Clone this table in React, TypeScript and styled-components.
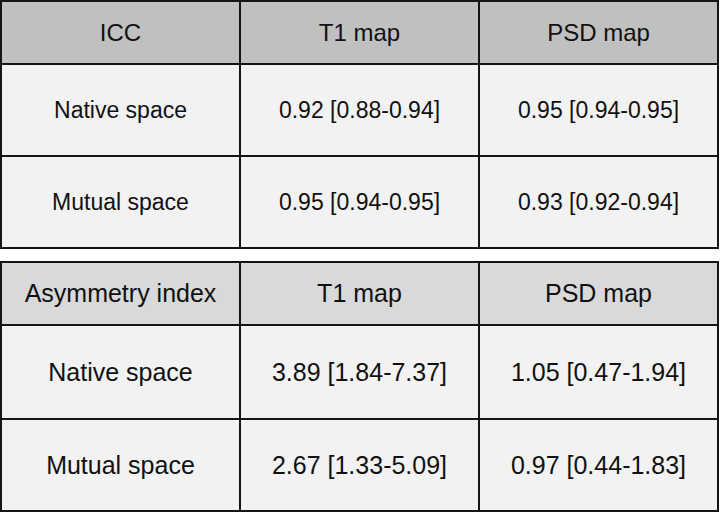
import { FC } from 'react';
import styled, { createGlobalStyle } from 'styled-components';

interface Row {
	label: string;
	t1: string;
	psd: string;
}

interface TableProps {
	title: string;
	rows: Row[];
	headBg: string;
	headSize: number;
	bodySize: number;
	rowHeights: number[];
}

const GlobalStyle = createGlobalStyle`
	html, body {
		margin: 0;
		padding: 0;
		background: #fff;
	}
	body {
		font-family: 'Liberation Sans', Arial, sans-serif;
		color: #111;
	}
`;

const Page = styled.div`
	width: 720px;
	display: flex;
	flex-direction: column;
	gap: 12px;
`;

const Grid = styled.table`
	width: 719px;
	border-collapse: collapse;
	table-layout: fixed;
	border: 2px solid #151515;

	td,
	th {
		border: 2px solid #151515;
		text-align: center;
		vertical-align: middle;
		padding: 0;
	}
`;

const HeadCell = styled.th<{ $bg: string; $size: number }>`
	background: ${(p) => p.$bg};
	font-weight: normal;
	font-size: ${(p) => p.$size}px;
`;

const Cell = styled.td<{ $size: number }>`
	background: #f2f2f2;
	font-size: ${(p) => p.$size}px;
`;

const DataTable: FC<TableProps> = ({ title, rows, headBg, headSize, bodySize, rowHeights }) => {
	return (
		<Grid>
			<thead>
				<tr style={{ height: rowHeights[0] }}>
					<HeadCell $bg={headBg} $size={headSize}>{title}</HeadCell>
					<HeadCell $bg={headBg} $size={headSize}>T1 map</HeadCell>
					<HeadCell $bg={headBg} $size={headSize}>PSD map</HeadCell>
				</tr>
			</thead>
			<tbody>
				{rows.map((r, i) => (
					<tr key={r.label} style={{ height: rowHeights[i + 1] }}>
						<Cell $size={bodySize}>{r.label}</Cell>
						<Cell $size={bodySize}>{r.t1}</Cell>
						<Cell $size={bodySize}>{r.psd}</Cell>
					</tr>
				))}
			</tbody>
		</Grid>
	);
};

const App: FC = () => {
	return (
		<>
			<GlobalStyle />
			<Page>
				<DataTable
					title="ICC"
					headBg="#c0c0c0"
					headSize={24}
					bodySize={23}
					rowHeights={[63, 92, 92]}
					rows={[
						{ label: 'Native space', t1: '0.92 [0.88-0.94]', psd: '0.95 [0.94-0.95]' },
						{ label: 'Mutual space', t1: '0.95 [0.94-0.95]', psd: '0.93 [0.92-0.94]' },
					]}
				/>
				<DataTable
					title="Asymmetry index"
					headBg="#d9d9d9"
					headSize={25}
					bodySize={25}
					rowHeights={[63, 94, 92]}
					rows={[
						{ label: 'Native space', t1: '3.89 [1.84-7.37]', psd: '1.05 [0.47-1.94]' },
						{ label: 'Mutual space', t1: '2.67 [1.33-5.09]', psd: '0.97 [0.44-1.83]' },
					]}
				/>
			</Page>
		</>
	);
};

export default App;
